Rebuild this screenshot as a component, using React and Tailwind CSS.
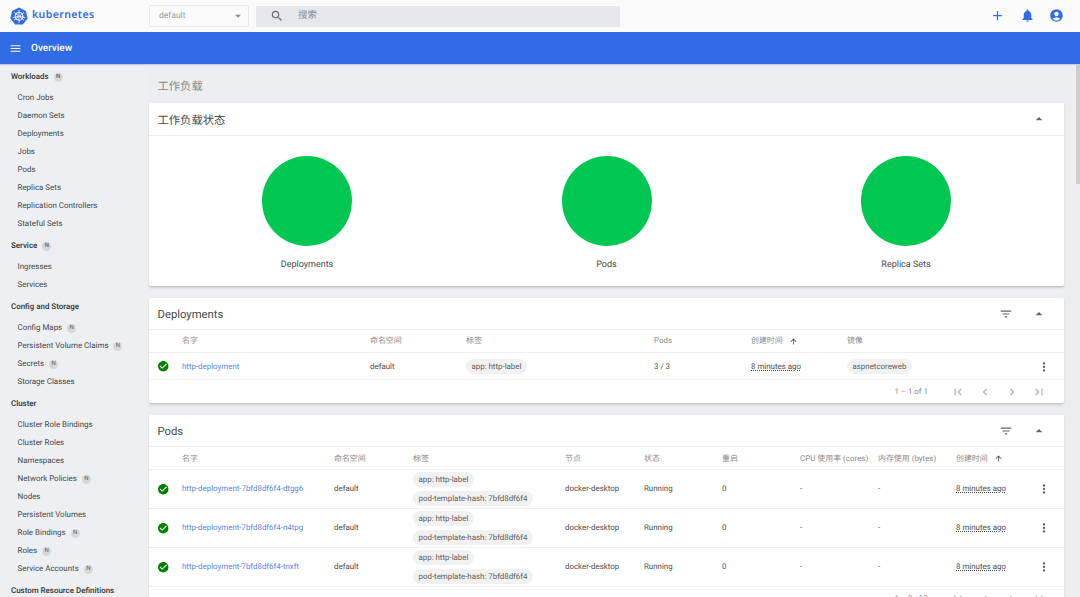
import React from "react";
import { MdAdd, MdNotifications, MdAccountCircle, MdMenu, MdSearch, MdFilterList, MdArrowDropUp, MdArrowDropDown, MdMoreVert, MdFirstPage, MdLastPage, MdChevronLeft, MdChevronRight, MdCheckCircle, MdArrowUpward } from "react-icons/md";

const font = { fontFamily: '"Roboto","Noto Sans CJK SC",sans-serif' };

const Logo = () => (
  <svg width="18" height="18" viewBox="0 0 24 24">
    <path d="M12 .8 21.2 5.2 23.5 15.2 17.1 23.2 6.9 23.2 .5 15.2 2.8 5.2Z" fill="#326ce5" />
    <g stroke="#fff" fill="none" strokeLinecap="round">
      <circle cx="12" cy="12.4" r="5.2" strokeWidth="1.3" />
      <circle cx="12" cy="12.4" r="1" fill="#fff" strokeWidth=".6" />
      <path strokeWidth="1.1" d="M12 4.4V10.6M12 14.2v6.2M18.3 7.4 13.4 11.3M10.6 13.5 5.7 17.4M5.7 7.4l4.9 3.9M13.4 13.5l4.9 3.9M4.2 14.2l6-1.4M13.8 12.8l6 1.4" />
    </g>
  </svg>
);

const N = () => (
  <span className="ml-[5px] inline-flex h-[9px] w-[9px] items-center justify-center rounded-full bg-[#d5d7d9] text-[6px] leading-none text-[#5f6368]">N</span>
);

const nav = [
  ["Workloads", true, [["Cron Jobs"], ["Daemon Sets"], ["Deployments"], ["Jobs"], ["Pods"], ["Replica Sets"], ["Replication Controllers"], ["Stateful Sets"]]],
  ["Service", true, [["Ingresses"], ["Services"]]],
  ["Config and Storage", false, [["Config Maps", true], ["Persistent Volume Claims", true], ["Secrets", true], ["Storage Classes"]]],
  ["Cluster", false, [["Cluster Role Bindings"], ["Cluster Roles"], ["Namespaces"], ["Network Policies", true], ["Nodes"], ["Persistent Volumes"], ["Role Bindings", true], ["Roles", true], ["Service Accounts", true]]],
  ["Custom Resource Definitions", false, []],
];

const Sidebar = () => (
  <aside className="w-[148px] shrink-0 overflow-hidden bg-[#edeff1] pt-[4px]">
    {nav.map(([title, badge, items], i) => (
      <div key={title} className={i ? "mt-[4px]" : ""}>
        <div className="mb-[3px] flex h-[18px] items-center pl-[11px] text-[7.95px] font-medium text-[#2f3336]">
          {title}
          {badge && <N />}
        </div>
        {items.map(([label, b]) => (
          <div key={label} className="flex h-[18px] items-center pl-[17.5px] text-[7.95px] text-[#44484c]">
            {label}
            {b && <N />}
          </div>
        ))}
      </div>
    ))}
  </aside>
);

const Chip = ({ children }) => (
  <span className="inline-flex h-[14.5px] items-center rounded-full bg-[#f1f1f1] px-[5.5px] text-[7.9px] whitespace-nowrap text-[#5d5d5d]">{children}</span>
);

const Status = () => (
  <span className="relative ml-[1px] flex h-[10px] w-[10px] items-center justify-center">
    <span className="absolute inset-[2px] bg-white" />
    <MdCheckCircle className="relative shrink-0 text-[12.5px] text-[#008000]" />
  </span>
);

const Header = ({ title }) => (
  <div className="flex h-[32px] items-center border-b border-[#eeeeee] pr-[17px] pl-[8.5px]">
    <span className="flex-1 pt-[3px] text-[11.3px] text-[#4a4a4a]">{title}</span>
    <MdFilterList className="mr-[18px] text-[14px] text-[#5f6368]" />
    <MdArrowDropUp className="text-[16px] text-[#5f6368]" />
  </div>
);

const Footer = ({ text }) => (
  <div className="flex h-[23px] items-center justify-end pt-[1px] pr-[18px] text-[#a8a8a8]">
    <span className="mr-[23px] text-[7.9px] text-[#8c8c8c]">{text}</span>
    <div className="flex w-[95px] items-center justify-between">
      <MdFirstPage className="text-[14px]" />
      <MdChevronLeft className="text-[14px]" />
      <MdChevronRight className="text-[14px]" />
      <MdLastPage className="text-[14px]" />
    </div>
  </div>
);

const Th = ({ children, arrow }) => (
  <div className="flex items-center text-[7.95px] whitespace-nowrap text-[#8a8a8a]">
    {children}
    {arrow && <MdArrowUpward className="ml-[6px] text-[9px] text-[#444]" />}
  </div>
);

const Td = ({ children, className = "" }) => (
  <div className={`flex items-center text-[7.9px] whitespace-nowrap text-[#4d4d4d] ${className}`}>{children}</div>
);

const Ago = () => <span className="text-[#4d4d4d] underline decoration-dotted underline-offset-[1px]">8 minutes ago</span>;

const Menu = () => (
  <div className="flex items-center justify-center">
    <MdMoreVert className="text-[14px] text-[#5f6368]" />
  </div>
);

const Deployments = () => {
  const cols = "grid grid-cols-[25px_188px_96px_188px_97px_96px_187px_20px] pl-[8px]";
  return (
    <section className="mb-[11px] rounded-[2px] border-b border-[#c6c6c6] bg-white shadow-sm">
      <Header title="Deployments" />
      <div className={`${cols} h-[23px] border-b border-[#eeeeee]`}>
        <div />
        <Th>名字</Th><Th>命名空间</Th><Th>标签</Th><Th>Pods</Th><Th arrow>创建时间</Th><Th>镜像</Th><div />
      </div>
      <div className={`${cols} h-[27px] border-b border-[#f2f2f2] pt-[1px]`}>
        <Td><Status /></Td>
        <Td className="text-[#5c86e8]">http-deployment</Td>
        <Td>default</Td>
        <Td><Chip>app: http-label</Chip></Td>
        <Td>3 / 3</Td>
        <Td><Ago /></Td>
        <Td><Chip>aspnetcoreweb</Chip></Td>
        <Menu />
      </div>
      <Footer text="1 – 1 of 1" />
    </section>
  );
};

const pods = ["dtgg6", "n4tpg", "tnxft"];

const Pods = () => {
  const cols = "grid grid-cols-[25px_152px_79px_152px_79px_78px_78px_78px_78px_78px_20px] pl-[8px]";
  return (
    <section className="rounded-[2px] bg-white shadow-sm">
      <Header title="Pods" />
      <div className={`${cols} h-[23px] border-b border-[#eeeeee] pt-[1px]`}>
        <div />
        <Th>名字</Th><Th>命名空间</Th><Th>标签</Th><Th>节点</Th><Th>状态</Th><Th>重启</Th>
        <Th>CPU 使用率 (cores)</Th><Th>内存使用 (bytes)</Th><Th arrow>创建时间</Th><div />
      </div>
      {pods.map((p) => (
        <div key={p} className={`${cols} h-[39px] border-b border-[#eeeeee]`}>
          <Td><Status /></Td>
          <Td className="text-[#5c86e8]">http-deployment-7bfd8df6f4-{p}</Td>
          <Td>default</Td>
          <div className="flex flex-col items-start justify-center gap-[4.5px]">
            <Chip>app: http-label</Chip>
            <Chip>pod-template-hash: 7bfd8df6f4</Chip>
          </div>
          <Td>docker-desktop</Td>
          <Td>Running</Td>
          <Td>0</Td>
          <Td>-</Td>
          <Td>-</Td>
          <Td><Ago /></Td>
          <Menu />
        </div>
      ))}
      <Footer text="1 – 3 of 3" />
    </section>
  );
};

const Workload = ({ label }) => (
  <div className="flex flex-col items-center">
    <div className="h-[90px] w-[90px] rounded-full bg-[#00c752]" />
    <div className="mt-[13px] text-[9px] leading-[12px] whitespace-nowrap text-[#4a4a4a]">{label}</div>
  </div>
);

export default function App() {
  return (
    <div style={font} className="flex h-[597px] w-[1080px] flex-col overflow-hidden bg-[#edeef0] [text-rendering:geometricPrecision]">
      <header className="flex h-[32px] shrink-0 items-center bg-[#fafafa]">
        <div className="flex w-[149px] shrink-0 items-center pl-[10px]">
          <Logo />
          <span style={{ fontFamily: '"Noto Sans",sans-serif' }} className="ml-[4px] text-[10.5px] font-semibold tracking-[0.4px] text-[#326ce5]">kubernetes</span>
        </div>
        <div className="flex h-[22px] w-[100px] items-center justify-between rounded-[2px] border border-[#e8e8e8] pr-[3px] pl-[9px] text-[8.5px] text-[#9a9a9a]">
          default
          <MdArrowDropDown className="text-[14px] text-[#8a8a8a]" />
        </div>
        <div className="ml-[7px] flex h-[21px] w-[364px] items-center bg-[#e5e8e8] pl-[14px] text-[9.5px] text-[#8a8f90]">
          <MdSearch className="text-[14px] text-[#6b6f70]" />
          <span className="ml-[14px]">搜索</span>
        </div>
        <div className="ml-auto flex items-center gap-[14.5px] pr-[16px] pb-[2px] text-[#326ce5]">
          <MdAdd className="text-[15px]" />
          <MdNotifications className="text-[15px]" />
          <MdAccountCircle className="text-[15px]" />
        </div>
      </header>
      <div className="relative z-10 flex h-[32px] shrink-0 items-center bg-[#326ce5] pl-[9px] text-white shadow-[0_1px_1px_#c4cbd6]">
        <MdMenu className="text-[13px]" />
        <span className="ml-[9px] text-[10px] font-medium">Overview</span>
      </div>
      <div className="flex min-h-0 flex-1">
        <Sidebar />
        <main className="min-w-0 flex-1 overflow-hidden pr-[11.5px] pl-[1px]">
          <h1 className="flex h-[39px] items-center pt-[8px] pl-[8.5px] text-[11.3px] font-normal text-[#8a8a8a]">工作负载</h1>
          <section className="mb-[11px] rounded-[2px] border-b border-[#c6c6c6] bg-white shadow-sm">
            <div className="flex h-[33px] items-center border-b border-[#eeeeee] pr-[17px] pl-[8.5px]">
              <span className="flex-1 pt-[5px] text-[11.3px] text-[#4a4a4a]">工作负载状态</span>
              <MdArrowDropUp className="text-[16px] text-[#5f6368]" />
            </div>
            <div className="flex h-[150px] items-start pt-[20px] pl-[113px]">
              <div className="w-[299.5px]"><div className="flex w-[90px] justify-center"><Workload label="Deployments" /></div></div>
              <div className="w-[299.5px]"><div className="flex w-[90px] justify-center"><Workload label="Pods" /></div></div>
              <div className="flex w-[90px] justify-center"><Workload label="Replica Sets" /></div>
            </div>
          </section>
          <Deployments />
          <Pods />
        </main>
        <div className="w-[4.5px] shrink-0 bg-[#eceef0]">
          <div className="h-[120px] bg-[#cdcdcd]" />
        </div>
      </div>
    </div>
  );
}
